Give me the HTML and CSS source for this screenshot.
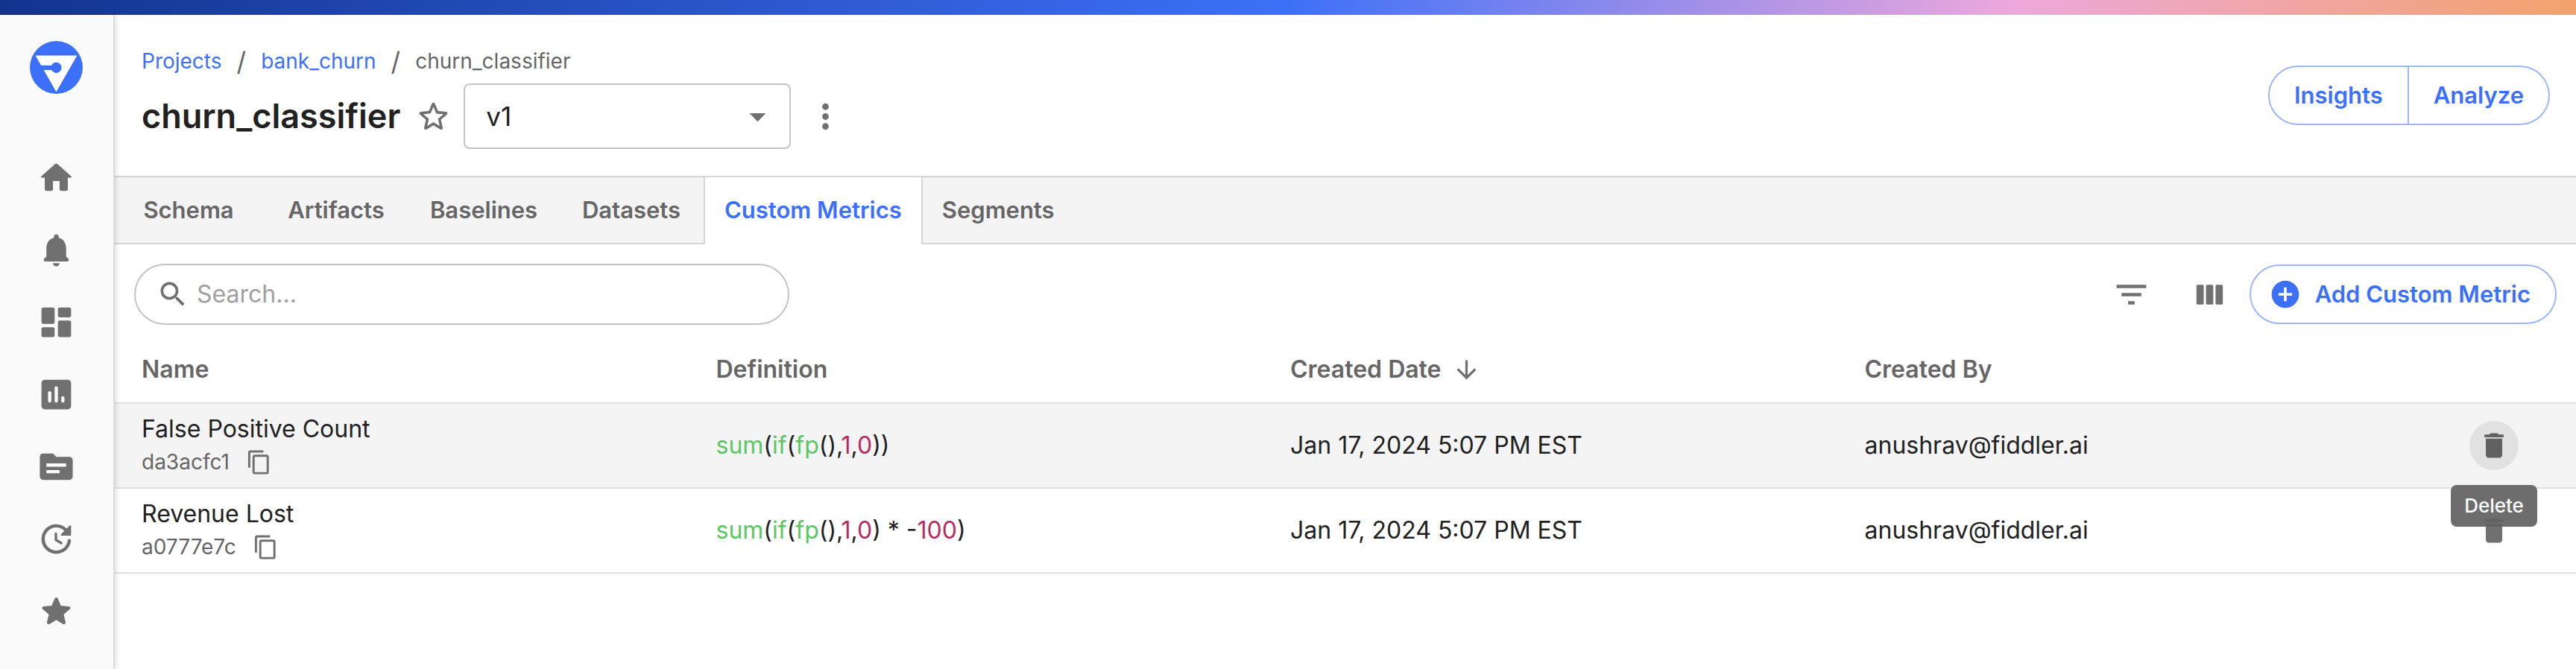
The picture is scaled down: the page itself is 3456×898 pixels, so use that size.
FILE: index.html
```html
<!DOCTYPE html>
<html lang="en">
<head>
<meta charset="utf-8">
<title>churn_classifier</title>
<link rel="stylesheet" href="styles.css">
</head>
<body>
<div class="brand-bar"></div>
<div class="shell">
  <nav class="sidebar" aria-label="Main">
    <a class="logo" href="#" aria-label="Fiddler">
      <svg viewBox="0 0 70 70"><circle cx="35" cy="35" r="35" fill="#3d70f8"/><path fill="#fff" d="M7.500 19.300h55L35 67.300 18.400 38.400h10.300A7 7 0 1 0 28.700 32.200H14.900z"/></svg>
    </a>
    <ul class="nav-list">
      <li><a class="nav-link" href="#" aria-label="Home"><svg class="icon" viewBox="0 0 24 24"><path d="M10 19v-5h4v5c0 .55.45 1 1 1h3c.55 0 1-.45 1-1v-7h1.700c.46 0 .68-.57.33-.87L12.670 3.600c-.38-.34-.96-.34-1.340 0l-8.360 7.530c-.34.3-.13.87.33.87H5v7c0 .55.45 1 1 1h3c.55 0 1-.45 1-1z"/></svg></a></li>
      <li><a class="nav-link" href="#" aria-label="Alerts"><svg class="icon" viewBox="0 0 24 24"><path d="M12 22c1.100 0 2-.9 2-2h-4c0 1.100.89 2 2 2zm6-6v-5c0-3.070-1.640-5.640-4.500-6.320V4c0-.83-.67-1.500-1.500-1.500s-1.500.67-1.500 1.500v.68C7.630 5.360 6 7.920 6 11v5l-1.290 1.290c-.63.63-.19 1.710.7 1.710h13.170c.89 0 1.340-1.080.71-1.710L18 16z"/></svg></a></li>
      <li><a class="nav-link" href="#" aria-label="Dashboards"><svg class="icon" viewBox="0 0 24 24"><path d="M4 13h6c.55 0 1-.45 1-1V4c0-.55-.45-1-1-1H4c-.55 0-1 .45-1 1v8c0 .55.45 1 1 1zm0 8h6c.55 0 1-.45 1-1v-4c0-.55-.45-1-1-1H4c-.55 0-1 .45-1 1v4c0 .55.45 1 1 1zm10 0h6c.55 0 1-.45 1-1v-8c0-.55-.45-1-1-1h-6c-.55 0-1 .45-1 1v8c0 .55.45 1 1 1zM13 4v4c0 .55.45 1 1 1h6c.55 0 1-.45 1-1V4c0-.55-.45-1-1-1h-6c-.55 0-1 .45-1 1z"/></svg></a></li>
      <li><a class="nav-link" href="#" aria-label="Charts"><svg class="icon" viewBox="0 0 24 24"><path d="M19 3H5c-1.100 0-2 .9-2 2v14c0 1.100.9 2 2 2h14c1.100 0 2-.9 2-2V5c0-1.100-.9-2-2-2zM8 17c-.55 0-1-.45-1-1v-5c0-.55.45-1 1-1s1 .45 1 1v5c0 .55-.45 1-1 1zm4 0c-.55 0-1-.45-1-1V8c0-.55.45-1 1-1s1 .45 1 1v8c0 .55-.45 1-1 1zm4 0c-.55 0-1-.45-1-1v-2c0-.55.45-1 1-1s1 .45 1 1v2c0 .55-.45 1-1 1z"/></svg></a></li>
      <li><a class="nav-link" href="#" aria-label="Projects"><svg class="icon" viewBox="0 0 24 24"><path d="M20 6h-8l-2-2H4c-1.100 0-1.990.9-1.990 2L2 18c0 1.100.9 2 2 2h16c1.100 0 2-.9 2-2V8c0-1.100-.9-2-2-2zm-6 10H6v-2h8v2zm4-4H6v-2h12v2z"/></svg></a></li>
      <li><a class="nav-link" href="#" aria-label="Jobs"><svg class="icon" viewBox="0 0 24 24"><path d="M11 8.750v3.680c0 .35.19.68.49.86l3.120 1.850c.36.21.82.09 1.030-.26.21-.36.1-.82-.26-1.030l-2.870-1.710v-3.400c-.01-.4-.35-.74-.76-.74s-.75.34-.75.75zm10 .75V4.210c0-.45-.54-.67-.85-.35l-1.780 1.780c-1.810-1.810-4.390-2.850-7.210-2.600-4.190.38-7.640 3.750-8.100 7.940C2.460 16.400 6.690 21 12 21c4.590 0 8.380-3.440 8.930-7.880.07-.6-.4-1.120-1-1.120-.5 0-.92.37-.98.86-.43 3.490-3.440 6.190-7.050 6.140-3.710-.05-6.840-3.180-6.900-6.900C4.940 8.200 8.110 5 12 5c1.930 0 3.680.79 4.950 2.050l-2.090 2.090c-.32.32-.1.86.35.86h5.290c.28 0 .5-.22.5-.5z"/></svg></a></li>
      <li><a class="nav-link" href="#" aria-label="Bookmarks"><svg class="icon" viewBox="0 0 24 24"><path d="M12 17.270l4.150 2.510c.76.46 1.690-.22 1.490-1.080l-1.100-4.720 3.670-3.180c.67-.58.31-1.680-.57-1.750l-4.830-.41-1.890-4.460c-.34-.81-1.500-.81-1.840 0L9.190 8.630l-4.830.41c-.88.07-1.240 1.170-.57 1.750l3.670 3.180-1.100 4.720c-.2.86.73 1.540 1.490 1.080l4.150-2.500z"/></svg></a></li>
    </ul>
  </nav>

  <main class="main">
    <header class="page-header">
      <div class="heading">
        <nav class="crumbs" aria-label="Breadcrumb">
          <a href="#">Projects</a><span class="slash">/</span><a href="#">bank_churn</a><span class="slash">/</span><span>churn_classifier</span>
        </nav>
        <div class="title-row">
          <h1 class="title">churn_classifier</h1>
          <button class="icon-button star" aria-label="Bookmark"><svg class="icon" viewBox="0 0 24 24"><path d="M19.650 9.040l-4.840-.42-1.890-4.450c-.34-.81-1.500-.81-1.840 0L9.190 8.630l-4.830.41c-.88.07-1.240 1.170-.57 1.750l3.670 3.180-1.100 4.720c-.2.86.73 1.540 1.490 1.080l4.150-2.500 4.150 2.510c.76.46 1.690-.22 1.490-1.080l-1.100-4.730 3.670-3.180c.67-.58.32-1.680-.56-1.750zM12 15.400l-3.760 2.270 1-4.280-3.320-2.880 4.380-.38L12 6.100l1.710 4.040 4.380.38-3.320 2.880 1 4.280L12 15.400z"/></svg></button>
          <div class="version">
            <select class="version-select" aria-label="Version"><option>v1</option></select>
            <svg class="icon caret" viewBox="0 0 24 24"><path d="M7 10l5 5 5-5z"/></svg>
          </div>
          <button class="icon-button" aria-label="More"><svg class="icon" viewBox="0 0 24 24"><path d="M12 8c1.100 0 2-.9 2-2s-.9-2-2-2-2 .9-2 2 .9 2 2 2zm0 2c-1.100 0-2 .9-2 2s.9 2 2 2 2-.9 2-2-.9-2-2-2zm0 6c-1.100 0-2 .9-2 2s.9 2 2 2 2-.9 2-2-.9-2-2-2z"/></svg></button>
        </div>
      </div>
      <div class="button-group">
        <button class="group-button">Insights</button>
        <button class="group-button">Analyze</button>
      </div>
    </header>

    <div class="tabs" role="tablist">
      <button class="tab" role="tab">Schema</button>
      <button class="tab" role="tab">Artifacts</button>
      <button class="tab" role="tab">Baselines</button>
      <button class="tab" role="tab">Datasets</button>
      <button class="tab tab-active" role="tab" aria-selected="true">Custom Metrics</button>
      <button class="tab" role="tab">Segments</button>
    </div>

    <div class="toolbar">
      <label class="search">
        <svg class="icon icon-medium" viewBox="0 0 24 24"><path d="M15.500 14h-.79l-.28-.27C15.410 12.590 16 11.110 16 9.500 16 5.910 13.090 3 9.500 3S3 5.910 3 9.500 5.910 16 9.500 16c1.610 0 3.090-.59 4.230-1.570l.27.28v.79l5 4.990L20.490 19l-4.990-5zm-6 0C7.010 14 5 11.990 5 9.500S7.010 5 9.500 5 14 7.010 14 9.500 11.990 14 9.500 14z"/></svg>
        <input class="search-input" type="text" placeholder="Search..." aria-label="Search">
      </label>
      <div class="actions">
        <button class="icon-button" aria-label="Filter"><svg class="icon" viewBox="0 0 24 24"><path d="M10 18h4v-2h-4v2zM3 6v2h18V6H3zm3 7h12v-2H6v2z"/></svg></button>
        <button class="icon-button" aria-label="Columns"><svg class="icon" viewBox="0 0 24 24"><rect x="4" y="6" width="4.400" height="12" rx=".7"/><rect x="9.800" y="6" width="4.400" height="12" rx=".7"/><rect x="15.600" y="6" width="4.400" height="12" rx=".7"/></svg></button>
        <button class="add-button"><svg class="icon icon-medium" viewBox="0 0 24 24"><path d="M12 2C6.480 2 2 6.480 2 12s4.480 10 10 10 10-4.480 10-10S17.520 2 12 2zm5 11h-4v4h-2v-4H7v-2h4V7h2v4h4v2z"/></svg>Add Custom Metric</button>
      </div>
    </div>

    <table class="metrics">
      <colgroup><col><col><col><col><col class="col-actions"></colgroup>
      <thead>
        <tr>
          <th>Name</th>
          <th>Definition</th>
          <th><span class="sorted">Created Date<svg class="icon icon-arrow" viewBox="0 0 24 24"><path d="M20 12l-1.410-1.410L13 16.170V4h-2v12.170l-5.580-5.590L4 12l8 8 8-8z"/></svg></span></th>
          <th>Created By</th>
          <th aria-label="Actions"></th>
        </tr>
      </thead>
      <tbody>
        <tr class="row-hover">
          <td>
            <div class="metric-name">False Positive Count</div>
            <div class="metric-id">da3acfc1<button class="icon-button" aria-label="Copy id"><svg class="icon icon-small" viewBox="0 0 24 24"><path d="M16 1H4c-1.100 0-2 .9-2 2v14h2V3h12V1zm3 4H8c-1.100 0-2 .9-2 2v14c0 1.100.9 2 2 2h11c1.100 0 2-.9 2-2V7c0-1.100-.9-2-2-2zm0 16H8V7h11v14z"/></svg></button></div>
          </td>
          <td><code class="formula"><span class="fn">sum</span>(<span class="fn">if</span>(<span class="fn">fp</span>(),<span class="num">1</span>,<span class="num">0</span>))</code></td>
          <td>Jan 17, 2024 5:07 PM EST</td>
          <td>anushrav@fiddler.ai</td>
          <td class="cell-actions">
            <div class="delete-wrap">
              <button class="delete delete-hover" aria-labelledby="tip"><svg class="icon icon-medium" viewBox="0 0 24 24"><path d="M6 19c0 1.100.9 2 2 2h8c1.100 0 2-.9 2-2V7H6v12zM19 4h-3.500l-1-1h-5l-1 1H5v2h14V4z"/></svg></button>
              <div class="tooltip" id="tip" role="tooltip">Delete</div>
            </div>
          </td>
        </tr>
        <tr>
          <td>
            <div class="metric-name">Revenue Lost</div>
            <div class="metric-id">a0777e7c<button class="icon-button" aria-label="Copy id"><svg class="icon icon-small" viewBox="0 0 24 24"><path d="M16 1H4c-1.100 0-2 .9-2 2v14h2V3h12V1zm3 4H8c-1.100 0-2 .9-2 2v14c0 1.100.9 2 2 2h11c1.100 0 2-.9 2-2V7c0-1.100-.9-2-2-2zm0 16H8V7h11v14z"/></svg></button></div>
          </td>
          <td><code class="formula"><span class="fn">sum</span>(<span class="fn">if</span>(<span class="fn">fp</span>(),<span class="num">1</span>,<span class="num">0</span>) * -<span class="num">100</span>)</code></td>
          <td>Jan 17, 2024 5:07 PM EST</td>
          <td>anushrav@fiddler.ai</td>
          <td class="cell-actions">
            <div class="delete-wrap">
              <button class="delete" aria-label="Delete"><svg class="icon icon-medium" viewBox="0 0 24 24"><path d="M6 19c0 1.100.9 2 2 2h8c1.100 0 2-.9 2-2V7H6v12zM19 4h-3.500l-1-1h-5l-1 1H5v2h14V4z"/></svg></button>
            </div>
          </td>
        </tr>
      </tbody>
    </table>
  </main>
</div>
</body>
</html>
```
FILE: styles.css
```css
:root {
  --blue: #3d70f8;
  --blue-soft: #9eb7fb;
  --ink: #212121;
  --grey: #666;
  --icon: #707070;
  --line: #d6d6d6;
}

* { box-sizing: border-box; }

body {
  margin: 0;
  min-height: 100vh;
  display: flex;
  flex-direction: column;
  background: #fff;
  color: var(--ink);
  font-family: Inter, "Liberation Sans", sans-serif;
  font-optical-sizing: none;
  font-size: 31px;
  line-height: 40px;
}

button, input, select {
  font: inherit;
  font-optical-sizing: none;
  color: inherit;
  background: none;
  border: 0;
  padding: 0;
}

a { color: var(--blue); text-decoration: none; }

.icon { display: block; flex: none; width: 53px; height: 53px; fill: var(--icon); }
.icon-medium { width: 44px; height: 44px; }
.icon-arrow { width: 39px; height: 39px; }
.icon-small { width: 35px; height: 35px; }
.icon-button { display: flex; }

.brand-bar {
  height: 20px;
  background: linear-gradient(115deg, #12348f 0%, #3d70f8 50%, #eda8dc 78%, #f3a26b 100%);
}

.shell { flex: 1; display: flex; }

/* Sidebar */
.sidebar {
  flex: none;
  width: 154px;
  padding: 35px 2px 0 0;
  background: #fafafa;
  border-right: 2px solid #dcdcdc;
  box-shadow: 2px 0 6px rgba(0, 0, 0, 0.12);
  z-index: 1;
  display: flex;
  flex-direction: column;
  align-items: center;
  gap: 64px;
}
.logo svg { display: block; width: 71px; height: 71px; }
.nav-list { list-style: none; margin: 0; padding: 0; }
.nav-link { display: flex; align-items: center; height: 97px; }

/* Header */
.main { flex: 1; min-width: 0; }
.page-header {
  display: flex;
  justify-content: space-between;
  align-items: flex-start;
  padding: 42px 35px 36px 36px;
}
.crumbs {
  display: flex;
  align-items: center;
  gap: 20px;
  height: 40px;
  margin-bottom: 10px;
  font-size: 28px;
  color: var(--grey);
}
.slash { font-size: 35px; }
.title-row { display: flex; align-items: center; }
.title { margin: 0; font-size: 45px; font-weight: 600; }
.star { margin: 0 14px 0 18px; }
.version { display: grid; width: 439px; align-items: center; margin-right: 20px; }
.version-select {
  grid-area: 1 / 1;
  height: 88px;
  padding: 0 28px;
  border: 2px solid #c4c4c4;
  border-radius: 8px;
  appearance: none;
  font-size: 35px;
}
.caret { grid-area: 1 / 1; justify-self: end; margin-right: 18px; pointer-events: none; }

.button-group { display: flex; margin-top: 26px; }
.group-button {
  height: 80px;
  padding: 0 33px;
  border: 2px solid var(--blue-soft);
  color: var(--blue);
  font-weight: 600;
}
.group-button:first-child { border-radius: 40px 0 0 40px; }
.group-button:last-child { border-radius: 0 40px 40px 0; border-left: 0; }

/* Tabs */
.tabs {
  display: flex;
  height: 92px;
  background: #f4f4f4;
  border-top: 2px solid var(--line);
  box-shadow: inset 0 -2px 0 var(--line);
}
.tab { min-width: 198px; padding: 0 26px 2px; color: var(--grey); font-weight: 600; }
.tab-active {
  margin-left: -2px;
  background: #fff;
  color: var(--blue);
  border: solid var(--line);
  border-width: 0 2px;
}

/* Toolbar */
.toolbar {
  display: flex;
  justify-content: space-between;
  align-items: center;
  padding: 26px;
}
.search {
  display: flex;
  align-items: center;
  gap: 10px;
  width: 879px;
  height: 82px;
  padding: 0 28px;
  border: 2px solid #c4c4c4;
  border-radius: 41px;
}
.search-input { flex: 1; min-width: 0; outline: 0; font-size: 32px; }
.search-input::placeholder { color: #a0a0a0; opacity: 1; }
.actions { display: flex; align-items: center; gap: 52px; }
.add-button {
  display: flex;
  align-items: center;
  gap: 18px;
  height: 80px;
  margin-left: -25px;
  padding: 0 33px 0 24px;
  border: 2px solid var(--blue-soft);
  border-radius: 40px;
  color: var(--blue);
  font-weight: 600;
}
.add-button .icon { fill: var(--blue); }

/* Table */
.metrics {
  width: 100%;
  table-layout: fixed;
  border-collapse: separate;
  border-spacing: 0;
  font-size: 32px;
}
.col-actions { width: 220px; }
.metrics th, .metrics td {
  padding: 0 36px;
  border-bottom: 2px solid #e0e0e0;
  text-align: left;
  vertical-align: middle;
}
.metrics th { height: 80px; padding-bottom: 10px; color: var(--grey); font-weight: 600; }
.metrics td { height: 114px; }
.sorted { display: flex; align-items: center; gap: 14px; }
.row-hover { background: #f4f4f4; }
.metric-name { line-height: 44px; }
.metric-id {
  display: flex;
  align-items: center;
  gap: 22px;
  line-height: 44px;
  font-size: 28px;
  color: var(--grey);
}
.formula { font-family: inherit; font-size: inherit; }
.fn { color: #5bc763; }
.num { color: #b72b62; }

.metrics .cell-actions { padding: 0; }
.delete-wrap { position: relative; display: flex; justify-content: center; }
.delete {
  display: flex;
  align-items: center;
  justify-content: center;
  width: 66px;
  height: 66px;
  border-radius: 50%;
}
.delete-hover { background: #e1e1e1; }
.delete-hover .icon { fill: #616161; }
.tooltip {
  position: absolute;
  top: calc(100% + 20px);
  z-index: 2;
  padding: 8px 18px;
  border-radius: 8px;
  background: rgba(97, 97, 97, 0.92);
  color: #fff;
  font-size: 26px;
  font-weight: 500;
}
```
